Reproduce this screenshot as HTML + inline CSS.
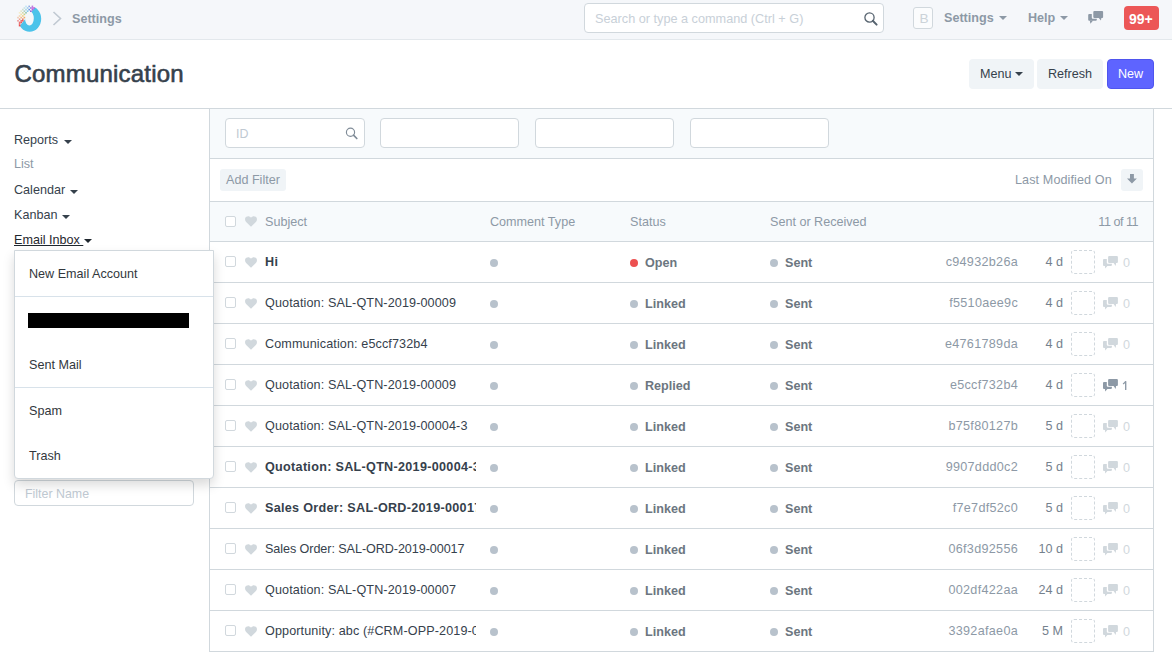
<!DOCTYPE html>
<html><head><meta charset="utf-8">
<style>
*{box-sizing:border-box;margin:0;padding:0}
html,body{width:1172px;height:652px;overflow:hidden;background:#fff;font-family:"Liberation Sans",sans-serif;color:#36414c;position:relative}
div,span,svg{position:absolute}
.t{white-space:nowrap;line-height:1}
.caret{width:0;height:0;border-left:4px solid transparent;border-right:4px solid transparent;border-top:4px solid currentColor}
#nav{left:0;top:0;width:1172px;height:40px;background:#f5f7fa;border-bottom:1px solid #e3e8ec}
.navt{font-size:12.6px;font-weight:700;color:#8d99a6;line-height:1}
.hline{height:1px;background:#d1d8dd}
.vline{width:1px;background:#d1d8dd}
.btn{height:30px;border-radius:4px;background:#f0f4f7;font-size:12.6px;line-height:30px;color:#36414c;white-space:nowrap}
.side{left:14px;font-size:12.6px;line-height:1;color:#36414c;white-space:nowrap}
.fin{height:30px;width:139px;top:118px;background:#fff;border:1px solid #d1d8dd;border-radius:4px}
.row{left:0;width:1172px;height:41px}
.row .cb{left:225px;top:14px;width:11px;height:11px;border:1px solid #d1d8dd;border-radius:2px;background:#fff}
.row .hrt{left:245px;top:15px;color:#d1d8dd}
.subj{left:265px;top:14px;font-size:12.6px;letter-spacing:0.12px;line-height:1;white-space:nowrap;overflow:hidden;width:211px;color:#36414c}
.subj.b{font-weight:700;letter-spacing:0.3px}
.dot{top:17px;width:8px;height:8px;border-radius:50%;background:#b8c2cc}
.dot.red{background:#ec5050}
.st{top:15px;font-size:12.6px;font-weight:700;line-height:1;color:#6c7680;white-space:nowrap}
.nm{right:154px;top:14px;font-size:12.6px;letter-spacing:0.3px;line-height:1;color:#8d99a6;white-space:nowrap}
.age{right:109px;top:14px;font-size:12.6px;line-height:1;color:#75818d;white-space:nowrap}
.dash{left:1071px;top:8px;width:24px;height:24px;border:1px dashed #d1d8dd;border-radius:3px}
.cmt{left:1103px;top:14px}
.cnt{left:1123px;top:15px;font-size:12.6px;line-height:1}
.dd{font-size:12.6px;line-height:1;color:#32373c;left:29px;white-space:nowrap}
</style></head>
<body>
<div id="nav">
  <svg style="left:14px;top:4px" width="30" height="30" viewBox="0 0 30 30"><defs><clipPath id="bl"><path d="M-2.3 31.5 L27.5 -4.8 L32 -4.8 L32 32 L-2.3 32 Z"/></clipPath></defs><path clip-path="url(#bl)" fill="#4cc3ea" fill-rule="evenodd" d="M4.0 14.8 A11.6 12.9 0 1 0 27.2 14.8 A11.6 12.9 0 1 0 4.0 14.8 Z M11.0 14.3 A4.4 7.3 0 1 0 19.8 14.3 A4.4 7.3 0 1 0 11.0 14.3 Z"/><rect x="3.2" y="12.8" width="1.6" height="1.6" fill="rgb(239, 138, 75)" fill-opacity="0.41"/><rect x="3.2" y="16.0" width="1.6" height="1.6" fill="rgb(232, 80, 79)" fill-opacity="0.59"/><rect x="4.8" y="8.0" width="1.6" height="1.6" fill="rgb(242, 207, 58)" fill-opacity="0.25"/><rect x="4.8" y="11.2" width="1.6" height="1.6" fill="rgb(242, 168, 69)" fill-opacity="0.43"/><rect x="4.8" y="14.4" width="1.6" height="1.6" fill="rgb(235, 108, 77)" fill-opacity="0.61"/><rect x="4.8" y="17.6" width="1.6" height="1.6" fill="rgb(232, 77, 77)" fill-opacity="0.80"/><rect x="4.8" y="19.2" width="1.6" height="1.6" fill="rgb(232, 75, 75)" fill-opacity="0.89"/><rect x="4.8" y="20.8" width="1.6" height="1.6" fill="rgb(232, 73, 73)" fill-opacity="0.98"/><rect x="6.4" y="6.4" width="1.6" height="1.6" fill="rgb(173, 186, 82)" fill-opacity="0.27"/><rect x="6.4" y="9.6" width="1.6" height="1.6" fill="rgb(242, 198, 61)" fill-opacity="0.45"/><rect x="6.4" y="12.8" width="1.6" height="1.6" fill="rgb(241, 147, 74)" fill-opacity="0.63"/><rect x="6.4" y="16.0" width="1.6" height="1.6" fill="rgb(232, 79, 79)" fill-opacity="0.82"/><rect x="6.4" y="17.6" width="1.6" height="1.6" fill="rgb(232, 76, 76)" fill-opacity="0.91"/><rect x="8.0" y="4.8" width="1.6" height="1.6" fill="rgb(104, 165, 115)" fill-opacity="0.29"/><rect x="8.0" y="8.0" width="1.6" height="1.6" fill="rgb(177, 188, 80)" fill-opacity="0.47"/><rect x="8.0" y="11.2" width="1.6" height="1.6" fill="rgb(242, 185, 64)" fill-opacity="0.65"/><rect x="8.0" y="14.4" width="1.6" height="1.6" fill="rgb(235, 104, 78)" fill-opacity="0.84"/><rect x="8.0" y="16.0" width="1.6" height="1.6" fill="rgb(232, 78, 78)" fill-opacity="0.93"/><rect x="9.6" y="3.2" width="1.6" height="1.6" fill="rgb(92, 179, 179)" fill-opacity="0.31"/><rect x="9.6" y="6.4" width="1.6" height="1.6" fill="rgb(102, 168, 127)" fill-opacity="0.49"/><rect x="9.6" y="9.6" width="1.6" height="1.6" fill="rgb(185, 191, 77)" fill-opacity="0.67"/><rect x="9.6" y="12.8" width="1.6" height="1.6" fill="rgb(242, 161, 71)" fill-opacity="0.86"/><rect x="11.2" y="1.6" width="1.6" height="1.6" fill="rgb(82, 191, 236)" fill-opacity="0.33"/><rect x="11.2" y="4.8" width="1.6" height="1.6" fill="rgb(87, 185, 205)" fill-opacity="0.51"/><rect x="11.2" y="8.0" width="1.6" height="1.6" fill="rgb(98, 172, 148)" fill-opacity="0.70"/><rect x="12.8" y="3.2" width="1.6" height="1.6" fill="rgb(73, 160, 229)" fill-opacity="0.53"/><rect x="12.8" y="6.4" width="1.6" height="1.6" fill="rgb(80, 184, 236)" fill-opacity="0.72"/><rect x="14.4" y="1.6" width="1.6" height="1.6" fill="rgb(61, 110, 216)" fill-opacity="0.55"/><rect x="14.4" y="4.8" width="1.6" height="1.6" fill="rgb(60, 113, 216)" fill-opacity="0.74"/><rect x="16.0" y="3.2" width="1.6" height="1.6" fill="rgb(126, 95, 216)" fill-opacity="0.76"/><rect x="16.0" y="6.4" width="1.6" height="1.6" fill="rgb(147, 90, 216)" fill-opacity="0.94"/><rect x="17.6" y="1.6" width="1.6" height="1.6" fill="rgb(177, 84, 216)" fill-opacity="0.78"/><rect x="17.6" y="3.2" width="1.6" height="1.6" fill="rgb(192, 80, 216)" fill-opacity="0.87"/><rect x="17.6" y="4.8" width="1.6" height="1.6" fill="rgb(196, 80, 216)" fill-opacity="0.96"/><rect x="19.2" y="3.2" width="1.6" height="1.6" fill="rgb(196, 80, 216)" fill-opacity="0.98"/></svg>
  <svg style="left:52px;top:11px" width="11" height="15" viewBox="0 0 11 15"><path d="M1.5 1 L8.5 7.5 L1.5 14" fill="none" stroke="#c0c9d2" stroke-width="1.6"/></svg>
  <div class="navt" style="left:72px;top:13px">Settings</div>
  <div style="left:584px;top:3px;width:300px;height:30px;background:#fff;border:1px solid #d1d8dd;border-radius:4px"></div>
  <div class="t" style="left:595px;top:13px;font-size:12.7px;color:#c8d0d8">Search or type a command (Ctrl + G)</div>
  <svg style="left:862px;top:10px" width="18" height="18" viewBox="0 0 18 18"><circle cx="7.5" cy="7.5" r="4.6" fill="none" stroke="#56636f" stroke-width="1.3"/><path d="M10.8 10.8 L14.6 14.6" stroke="#56636f" stroke-width="2" stroke-linecap="round"/></svg>
  <div style="left:913px;top:7px;width:20px;height:22px;border:1px solid #d1d8dd;border-radius:3px;background:#fbfcfd"></div>
  <div class="t" style="left:919.5px;top:12px;font-size:13.6px;color:#ccd3d9">B</div>
  <div class="navt" style="left:944px;top:12px">Settings</div>
  <div class="caret" style="left:999px;top:16px;color:#8d99a6"></div>
  <div class="navt" style="left:1028px;top:12px">Help</div>
  <div class="caret" style="left:1060px;top:16px;color:#8d99a6"></div>
  <svg style="left:1088px;top:11px" width="16" height="14" viewBox="0 0 16 14"><rect x="5.3" y="0" width="9.8" height="7" rx="1" fill="#8d99a6"/><path d="M10.6 6.8 L13.4 6.8 L12.9 9.4 Z" fill="#8d99a6"/><path d="M1.2 2.9 H3.8 V6.7 Q3.8 7.7 4.8 7.7 H8.8 V8.7 Q8.8 9.7 7.8 9.7 H1.2 Q0.2 9.7 0.2 8.7 V3.9 Q0.2 2.9 1.2 2.9 Z" fill="#8d99a6"/><path d="M1.8 9.5 L5.1 9.5 L2.4 12.7 Z" fill="#8d99a6"/></svg>
  <div style="left:1124px;top:6px;width:35px;height:24px;background:#ec5757;border-radius:4px"></div>
  <div class="t" style="left:1129px;top:11.5px;font-size:14px;font-weight:700;color:#fff">99+</div>
</div>

<!-- page head -->
<div class="t" style="left:14.5px;top:62px;font-size:24px;font-weight:400;color:#36414c;-webkit-text-stroke:0.6px #36414c;letter-spacing:0.2px">Communication</div>
<div class="btn" style="left:969px;top:59px;width:65px;padding-left:11px">Menu</div>
<div class="caret" style="left:1015px;top:72px;color:#36414c"></div>
<div class="btn" style="left:1037px;top:59px;width:66px;padding-left:11px">Refresh</div>
<div class="btn" style="left:1107px;top:59px;width:47px;padding-left:10px;background:#5e64ff;color:#fff;border:1px solid #4f55ee;line-height:28px">New</div>
<div class="hline" style="left:0;top:108px;width:1172px"></div>

<!-- sidebar -->
<div class="side" style="top:134px">Reports</div><div class="caret" style="left:64px;top:140px"></div>
<div class="side" style="top:158px;color:#8d99a6">List</div>
<div class="side" style="top:184px">Calendar</div><div class="caret" style="left:70px;top:190px"></div>
<div class="side" style="top:209px">Kanban</div><div class="caret" style="left:62px;top:215px"></div>
<div class="side" style="top:234px;text-decoration:underline;color:#1f272e">Email Inbox&nbsp;</div><div class="caret" style="left:84px;top:239px;color:#1f272e"></div>
<div style="left:14px;top:480px;width:180px;height:26px;border:1px solid #d1d8dd;border-radius:4px"></div>
<div class="t" style="left:25px;top:488px;font-size:12.4px;color:#c0c9d2">Filter Name</div>

<!-- main -->
<div style="left:210px;top:109px;width:943px;height:49px;background:#f7fafc"></div>
<div class="vline" style="left:209px;top:109px;height:543px"></div>
<div class="vline" style="left:1153px;top:109px;height:543px"></div>
<div class="fin" style="left:225px;width:140px"></div>
<div class="t" style="left:236px;top:128px;font-size:12.4px;color:#c0c9d2">ID</div>
<svg style="left:344px;top:126px" width="16" height="16" viewBox="0 0 16 16"><circle cx="6.5" cy="6.2" r="4.1" fill="none" stroke="#7f8b97" stroke-width="1.15"/><path d="M9.5 9.2 L12.8 12.5" stroke="#7f8b97" stroke-width="1.7" stroke-linecap="round"/></svg>
<div class="fin" style="left:380px"></div>
<div class="fin" style="left:535px"></div>
<div class="fin" style="left:690px"></div>
<div class="hline" style="left:210px;top:158px;width:943px"></div>
<div style="left:220px;top:169px;width:66px;height:22px;background:#f0f4f7;border-radius:3px"></div>
<div class="t" style="left:226px;top:174px;font-size:12.6px;color:#8d99a6">Add Filter</div>
<div class="t" style="left:1015px;top:174px;font-size:12.6px;color:#8d99a6;letter-spacing:0.1px">Last Modified On</div>
<div style="left:1121px;top:169px;width:22px;height:22px;background:#f0f4f7;border-radius:3px"></div>
<svg style="left:1121px;top:169px" width="22" height="22" viewBox="0 0 22 22"><path d="M9 4.9 H12.9 V9.5 H15.9 L10.95 14.6 L6 9.5 H9 Z" fill="#8d99a6"/></svg>
<div class="hline" style="left:210px;top:201px;width:943px"></div>
<div style="left:210px;top:202px;width:943px;height:39px;background:#f7fafc"></div>
<div style="left:225px;top:216px;width:11px;height:11px;border:1px solid #d1d8dd;border-radius:2px;background:#fff"></div>
<svg style="left:245px;top:216px;color:#d1d8dd" width="12" height="11" viewBox="0 0 12 11"><path d="M6 10.8 L1.1 6 C-0.4 4.4 -0.3 1.9 1.3 0.8 C2.8 -0.3 4.8 0.1 6 1.7 C7.2 0.1 9.2 -0.3 10.7 0.8 C12.3 1.9 12.4 4.4 10.9 6 Z" fill="currentColor"/></svg>
<div class="t" style="left:265px;top:216px;font-size:12.6px;color:#8d99a6">Subject</div>
<div class="t" style="left:490px;top:216px;font-size:12.6px;color:#8d99a6">Comment Type</div>
<div class="t" style="left:630px;top:216px;font-size:12.6px;color:#8d99a6">Status</div>
<div class="t" style="left:770px;top:216px;font-size:12.6px;color:#8d99a6">Sent or Received</div>
<div class="t" style="right:34px;top:216px;font-size:12.6px;color:#8d99a6;letter-spacing:-0.5px">11 of 11</div>
<div class="hline" style="left:210px;top:241px;width:943px"></div>

<div class="row" style="top:242px">
<div class="cb"></div><svg class="hrt" width="12" height="11" viewBox="0 0 12 11"><path d="M6 10.8 L1.1 6 C-0.4 4.4 -0.3 1.9 1.3 0.8 C2.8 -0.3 4.8 0.1 6 1.7 C7.2 0.1 9.2 -0.3 10.7 0.8 C12.3 1.9 12.4 4.4 10.9 6 Z" fill="currentColor"/></svg>
<div class="subj b">Hi</div>
<div class="dot" style="left:490px"></div>
<div class="dot red" style="left:630px"></div><div class="st" style="left:645px">Open</div>
<div class="dot" style="left:770px"></div><div class="st" style="left:785px">Sent</div>
<div class="nm">c94932b26a</div><div class="age">4 d</div><div class="dash"></div><svg class="cmt" width="16" height="14" viewBox="0 0 16 14"><rect x="5.1" y="0" width="9.8" height="6.9" rx="1" fill="#d1d8dd"/><path d="M10.4 6.7 L13.1 6.7 L12.7 9.9 Z" fill="#d1d8dd"/><path d="M1 3.1 H3.8 V6.8 Q3.8 7.8 4.8 7.8 H8.9 V8.9 Q8.9 9.9 7.9 9.9 H1 Q0 9.9 0 8.9 V4.1 Q0 3.1 1 3.1 Z" fill="#d1d8dd"/><path d="M1.9 9.6 L4.8 9.6 L2.2 12.6 Z" fill="#d1d8dd"/></svg><div class="cnt" style="color:#d1d8dd">0</div><div class="hline" style="left:210px;top:40px;width:943px"></div>
</div>
<div class="row" style="top:283px">
<div class="cb"></div><svg class="hrt" width="12" height="11" viewBox="0 0 12 11"><path d="M6 10.8 L1.1 6 C-0.4 4.4 -0.3 1.9 1.3 0.8 C2.8 -0.3 4.8 0.1 6 1.7 C7.2 0.1 9.2 -0.3 10.7 0.8 C12.3 1.9 12.4 4.4 10.9 6 Z" fill="currentColor"/></svg>
<div class="subj">Quotation: SAL-QTN-2019-00009</div>
<div class="dot" style="left:490px"></div>
<div class="dot" style="left:630px"></div><div class="st" style="left:645px">Linked</div>
<div class="dot" style="left:770px"></div><div class="st" style="left:785px">Sent</div>
<div class="nm">f5510aee9c</div><div class="age">4 d</div><div class="dash"></div><svg class="cmt" width="16" height="14" viewBox="0 0 16 14"><rect x="5.1" y="0" width="9.8" height="6.9" rx="1" fill="#d1d8dd"/><path d="M10.4 6.7 L13.1 6.7 L12.7 9.9 Z" fill="#d1d8dd"/><path d="M1 3.1 H3.8 V6.8 Q3.8 7.8 4.8 7.8 H8.9 V8.9 Q8.9 9.9 7.9 9.9 H1 Q0 9.9 0 8.9 V4.1 Q0 3.1 1 3.1 Z" fill="#d1d8dd"/><path d="M1.9 9.6 L4.8 9.6 L2.2 12.6 Z" fill="#d1d8dd"/></svg><div class="cnt" style="color:#d1d8dd">0</div><div class="hline" style="left:210px;top:40px;width:943px"></div>
</div>
<div class="row" style="top:324px">
<div class="cb"></div><svg class="hrt" width="12" height="11" viewBox="0 0 12 11"><path d="M6 10.8 L1.1 6 C-0.4 4.4 -0.3 1.9 1.3 0.8 C2.8 -0.3 4.8 0.1 6 1.7 C7.2 0.1 9.2 -0.3 10.7 0.8 C12.3 1.9 12.4 4.4 10.9 6 Z" fill="currentColor"/></svg>
<div class="subj">Communication: e5ccf732b4</div>
<div class="dot" style="left:490px"></div>
<div class="dot" style="left:630px"></div><div class="st" style="left:645px">Linked</div>
<div class="dot" style="left:770px"></div><div class="st" style="left:785px">Sent</div>
<div class="nm">e4761789da</div><div class="age">4 d</div><div class="dash"></div><svg class="cmt" width="16" height="14" viewBox="0 0 16 14"><rect x="5.1" y="0" width="9.8" height="6.9" rx="1" fill="#d1d8dd"/><path d="M10.4 6.7 L13.1 6.7 L12.7 9.9 Z" fill="#d1d8dd"/><path d="M1 3.1 H3.8 V6.8 Q3.8 7.8 4.8 7.8 H8.9 V8.9 Q8.9 9.9 7.9 9.9 H1 Q0 9.9 0 8.9 V4.1 Q0 3.1 1 3.1 Z" fill="#d1d8dd"/><path d="M1.9 9.6 L4.8 9.6 L2.2 12.6 Z" fill="#d1d8dd"/></svg><div class="cnt" style="color:#d1d8dd">0</div><div class="hline" style="left:210px;top:40px;width:943px"></div>
</div>
<div class="row" style="top:365px">
<div class="cb"></div><svg class="hrt" width="12" height="11" viewBox="0 0 12 11"><path d="M6 10.8 L1.1 6 C-0.4 4.4 -0.3 1.9 1.3 0.8 C2.8 -0.3 4.8 0.1 6 1.7 C7.2 0.1 9.2 -0.3 10.7 0.8 C12.3 1.9 12.4 4.4 10.9 6 Z" fill="currentColor"/></svg>
<div class="subj">Quotation: SAL-QTN-2019-00009</div>
<div class="dot" style="left:490px"></div>
<div class="dot" style="left:630px"></div><div class="st" style="left:645px">Replied</div>
<div class="dot" style="left:770px"></div><div class="st" style="left:785px">Sent</div>
<div class="nm">e5ccf732b4</div><div class="age">4 d</div><div class="dash"></div><svg class="cmt" width="16" height="14" viewBox="0 0 16 14"><rect x="5.1" y="0" width="9.8" height="6.9" rx="1" fill="#8d99a6"/><path d="M10.4 6.7 L13.1 6.7 L12.7 9.9 Z" fill="#8d99a6"/><path d="M1 3.1 H3.8 V6.8 Q3.8 7.8 4.8 7.8 H8.9 V8.9 Q8.9 9.9 7.9 9.9 H1 Q0 9.9 0 8.9 V4.1 Q0 3.1 1 3.1 Z" fill="#8d99a6"/><path d="M1.9 9.6 L4.8 9.6 L2.2 12.6 Z" fill="#8d99a6"/></svg><svg style="left:1122px;top:15px" width="6" height="11" viewBox="0 0 6 11"><path d="M3.7 1.2 V9.9" stroke="#8d99a6" stroke-width="1.35"/><path d="M1 4 Q2.9 3 3.7 1.3" fill="none" stroke="#8d99a6" stroke-width="1.2"/></svg><div class="hline" style="left:210px;top:40px;width:943px"></div>
</div>
<div class="row" style="top:406px">
<div class="cb"></div><svg class="hrt" width="12" height="11" viewBox="0 0 12 11"><path d="M6 10.8 L1.1 6 C-0.4 4.4 -0.3 1.9 1.3 0.8 C2.8 -0.3 4.8 0.1 6 1.7 C7.2 0.1 9.2 -0.3 10.7 0.8 C12.3 1.9 12.4 4.4 10.9 6 Z" fill="currentColor"/></svg>
<div class="subj">Quotation: SAL-QTN-2019-00004-3</div>
<div class="dot" style="left:490px"></div>
<div class="dot" style="left:630px"></div><div class="st" style="left:645px">Linked</div>
<div class="dot" style="left:770px"></div><div class="st" style="left:785px">Sent</div>
<div class="nm">b75f80127b</div><div class="age">5 d</div><div class="dash"></div><svg class="cmt" width="16" height="14" viewBox="0 0 16 14"><rect x="5.1" y="0" width="9.8" height="6.9" rx="1" fill="#d1d8dd"/><path d="M10.4 6.7 L13.1 6.7 L12.7 9.9 Z" fill="#d1d8dd"/><path d="M1 3.1 H3.8 V6.8 Q3.8 7.8 4.8 7.8 H8.9 V8.9 Q8.9 9.9 7.9 9.9 H1 Q0 9.9 0 8.9 V4.1 Q0 3.1 1 3.1 Z" fill="#d1d8dd"/><path d="M1.9 9.6 L4.8 9.6 L2.2 12.6 Z" fill="#d1d8dd"/></svg><div class="cnt" style="color:#d1d8dd">0</div><div class="hline" style="left:210px;top:40px;width:943px"></div>
</div>
<div class="row" style="top:447px">
<div class="cb"></div><svg class="hrt" width="12" height="11" viewBox="0 0 12 11"><path d="M6 10.8 L1.1 6 C-0.4 4.4 -0.3 1.9 1.3 0.8 C2.8 -0.3 4.8 0.1 6 1.7 C7.2 0.1 9.2 -0.3 10.7 0.8 C12.3 1.9 12.4 4.4 10.9 6 Z" fill="currentColor"/></svg>
<div class="subj b">Quotation: SAL-QTN-2019-00004-3</div>
<div class="dot" style="left:490px"></div>
<div class="dot" style="left:630px"></div><div class="st" style="left:645px">Linked</div>
<div class="dot" style="left:770px"></div><div class="st" style="left:785px">Sent</div>
<div class="nm">9907ddd0c2</div><div class="age">5 d</div><div class="dash"></div><svg class="cmt" width="16" height="14" viewBox="0 0 16 14"><rect x="5.1" y="0" width="9.8" height="6.9" rx="1" fill="#d1d8dd"/><path d="M10.4 6.7 L13.1 6.7 L12.7 9.9 Z" fill="#d1d8dd"/><path d="M1 3.1 H3.8 V6.8 Q3.8 7.8 4.8 7.8 H8.9 V8.9 Q8.9 9.9 7.9 9.9 H1 Q0 9.9 0 8.9 V4.1 Q0 3.1 1 3.1 Z" fill="#d1d8dd"/><path d="M1.9 9.6 L4.8 9.6 L2.2 12.6 Z" fill="#d1d8dd"/></svg><div class="cnt" style="color:#d1d8dd">0</div><div class="hline" style="left:210px;top:40px;width:943px"></div>
</div>
<div class="row" style="top:488px">
<div class="cb"></div><svg class="hrt" width="12" height="11" viewBox="0 0 12 11"><path d="M6 10.8 L1.1 6 C-0.4 4.4 -0.3 1.9 1.3 0.8 C2.8 -0.3 4.8 0.1 6 1.7 C7.2 0.1 9.2 -0.3 10.7 0.8 C12.3 1.9 12.4 4.4 10.9 6 Z" fill="currentColor"/></svg>
<div class="subj b">Sales Order: SAL-ORD-2019-00017</div>
<div class="dot" style="left:490px"></div>
<div class="dot" style="left:630px"></div><div class="st" style="left:645px">Linked</div>
<div class="dot" style="left:770px"></div><div class="st" style="left:785px">Sent</div>
<div class="nm">f7e7df52c0</div><div class="age">5 d</div><div class="dash"></div><svg class="cmt" width="16" height="14" viewBox="0 0 16 14"><rect x="5.1" y="0" width="9.8" height="6.9" rx="1" fill="#d1d8dd"/><path d="M10.4 6.7 L13.1 6.7 L12.7 9.9 Z" fill="#d1d8dd"/><path d="M1 3.1 H3.8 V6.8 Q3.8 7.8 4.8 7.8 H8.9 V8.9 Q8.9 9.9 7.9 9.9 H1 Q0 9.9 0 8.9 V4.1 Q0 3.1 1 3.1 Z" fill="#d1d8dd"/><path d="M1.9 9.6 L4.8 9.6 L2.2 12.6 Z" fill="#d1d8dd"/></svg><div class="cnt" style="color:#d1d8dd">0</div><div class="hline" style="left:210px;top:40px;width:943px"></div>
</div>
<div class="row" style="top:529px">
<div class="cb"></div><svg class="hrt" width="12" height="11" viewBox="0 0 12 11"><path d="M6 10.8 L1.1 6 C-0.4 4.4 -0.3 1.9 1.3 0.8 C2.8 -0.3 4.8 0.1 6 1.7 C7.2 0.1 9.2 -0.3 10.7 0.8 C12.3 1.9 12.4 4.4 10.9 6 Z" fill="currentColor"/></svg>
<div class="subj" style="letter-spacing:-0.07px">Sales Order: SAL-ORD-2019-00017</div>
<div class="dot" style="left:490px"></div>
<div class="dot" style="left:630px"></div><div class="st" style="left:645px">Linked</div>
<div class="dot" style="left:770px"></div><div class="st" style="left:785px">Sent</div>
<div class="nm">06f3d92556</div><div class="age">10 d</div><div class="dash"></div><svg class="cmt" width="16" height="14" viewBox="0 0 16 14"><rect x="5.1" y="0" width="9.8" height="6.9" rx="1" fill="#d1d8dd"/><path d="M10.4 6.7 L13.1 6.7 L12.7 9.9 Z" fill="#d1d8dd"/><path d="M1 3.1 H3.8 V6.8 Q3.8 7.8 4.8 7.8 H8.9 V8.9 Q8.9 9.9 7.9 9.9 H1 Q0 9.9 0 8.9 V4.1 Q0 3.1 1 3.1 Z" fill="#d1d8dd"/><path d="M1.9 9.6 L4.8 9.6 L2.2 12.6 Z" fill="#d1d8dd"/></svg><div class="cnt" style="color:#d1d8dd">0</div><div class="hline" style="left:210px;top:40px;width:943px"></div>
</div>
<div class="row" style="top:570px">
<div class="cb"></div><svg class="hrt" width="12" height="11" viewBox="0 0 12 11"><path d="M6 10.8 L1.1 6 C-0.4 4.4 -0.3 1.9 1.3 0.8 C2.8 -0.3 4.8 0.1 6 1.7 C7.2 0.1 9.2 -0.3 10.7 0.8 C12.3 1.9 12.4 4.4 10.9 6 Z" fill="currentColor"/></svg>
<div class="subj">Quotation: SAL-QTN-2019-00007</div>
<div class="dot" style="left:490px"></div>
<div class="dot" style="left:630px"></div><div class="st" style="left:645px">Linked</div>
<div class="dot" style="left:770px"></div><div class="st" style="left:785px">Sent</div>
<div class="nm">002df422aa</div><div class="age">24 d</div><div class="dash"></div><svg class="cmt" width="16" height="14" viewBox="0 0 16 14"><rect x="5.1" y="0" width="9.8" height="6.9" rx="1" fill="#d1d8dd"/><path d="M10.4 6.7 L13.1 6.7 L12.7 9.9 Z" fill="#d1d8dd"/><path d="M1 3.1 H3.8 V6.8 Q3.8 7.8 4.8 7.8 H8.9 V8.9 Q8.9 9.9 7.9 9.9 H1 Q0 9.9 0 8.9 V4.1 Q0 3.1 1 3.1 Z" fill="#d1d8dd"/><path d="M1.9 9.6 L4.8 9.6 L2.2 12.6 Z" fill="#d1d8dd"/></svg><div class="cnt" style="color:#d1d8dd">0</div><div class="hline" style="left:210px;top:40px;width:943px"></div>
</div>
<div class="row" style="top:611px">
<div class="cb"></div><svg class="hrt" width="12" height="11" viewBox="0 0 12 11"><path d="M6 10.8 L1.1 6 C-0.4 4.4 -0.3 1.9 1.3 0.8 C2.8 -0.3 4.8 0.1 6 1.7 C7.2 0.1 9.2 -0.3 10.7 0.8 C12.3 1.9 12.4 4.4 10.9 6 Z" fill="currentColor"/></svg>
<div class="subj">Opportunity: abc (#CRM-OPP-2019-00001)</div>
<div class="dot" style="left:490px"></div>
<div class="dot" style="left:630px"></div><div class="st" style="left:645px">Linked</div>
<div class="dot" style="left:770px"></div><div class="st" style="left:785px">Sent</div>
<div class="nm">3392afae0a</div><div class="age">5 M</div><div class="dash"></div><svg class="cmt" width="16" height="14" viewBox="0 0 16 14"><rect x="5.1" y="0" width="9.8" height="6.9" rx="1" fill="#d1d8dd"/><path d="M10.4 6.7 L13.1 6.7 L12.7 9.9 Z" fill="#d1d8dd"/><path d="M1 3.1 H3.8 V6.8 Q3.8 7.8 4.8 7.8 H8.9 V8.9 Q8.9 9.9 7.9 9.9 H1 Q0 9.9 0 8.9 V4.1 Q0 3.1 1 3.1 Z" fill="#d1d8dd"/><path d="M1.9 9.6 L4.8 9.6 L2.2 12.6 Z" fill="#d1d8dd"/></svg><div class="cnt" style="color:#d1d8dd">0</div><div class="hline" style="left:210px;top:40px;width:943px"></div>
</div>

<!-- dropdown -->
<div style="left:14px;top:250px;width:200px;height:229px;background:#fff;border:1px solid #d1d8dd;border-radius:0 0 4px 4px;box-shadow:0 6px 12px rgba(0,0,0,0.15)"></div>
<div class="dd t" style="top:268px">New Email Account</div>
<div class="hline" style="left:15px;top:296px;width:198px;background:#d8e2ea"></div>
<div style="left:27.5px;top:313px;width:161.5px;height:14.5px;background:#000"></div>
<div class="dd t" style="top:359px">Sent Mail</div>
<div class="hline" style="left:15px;top:387px;width:198px;background:#d8e2ea"></div>
<div class="dd t" style="top:405px">Spam</div>
<div class="dd t" style="top:450px">Trash</div>
</body></html>
